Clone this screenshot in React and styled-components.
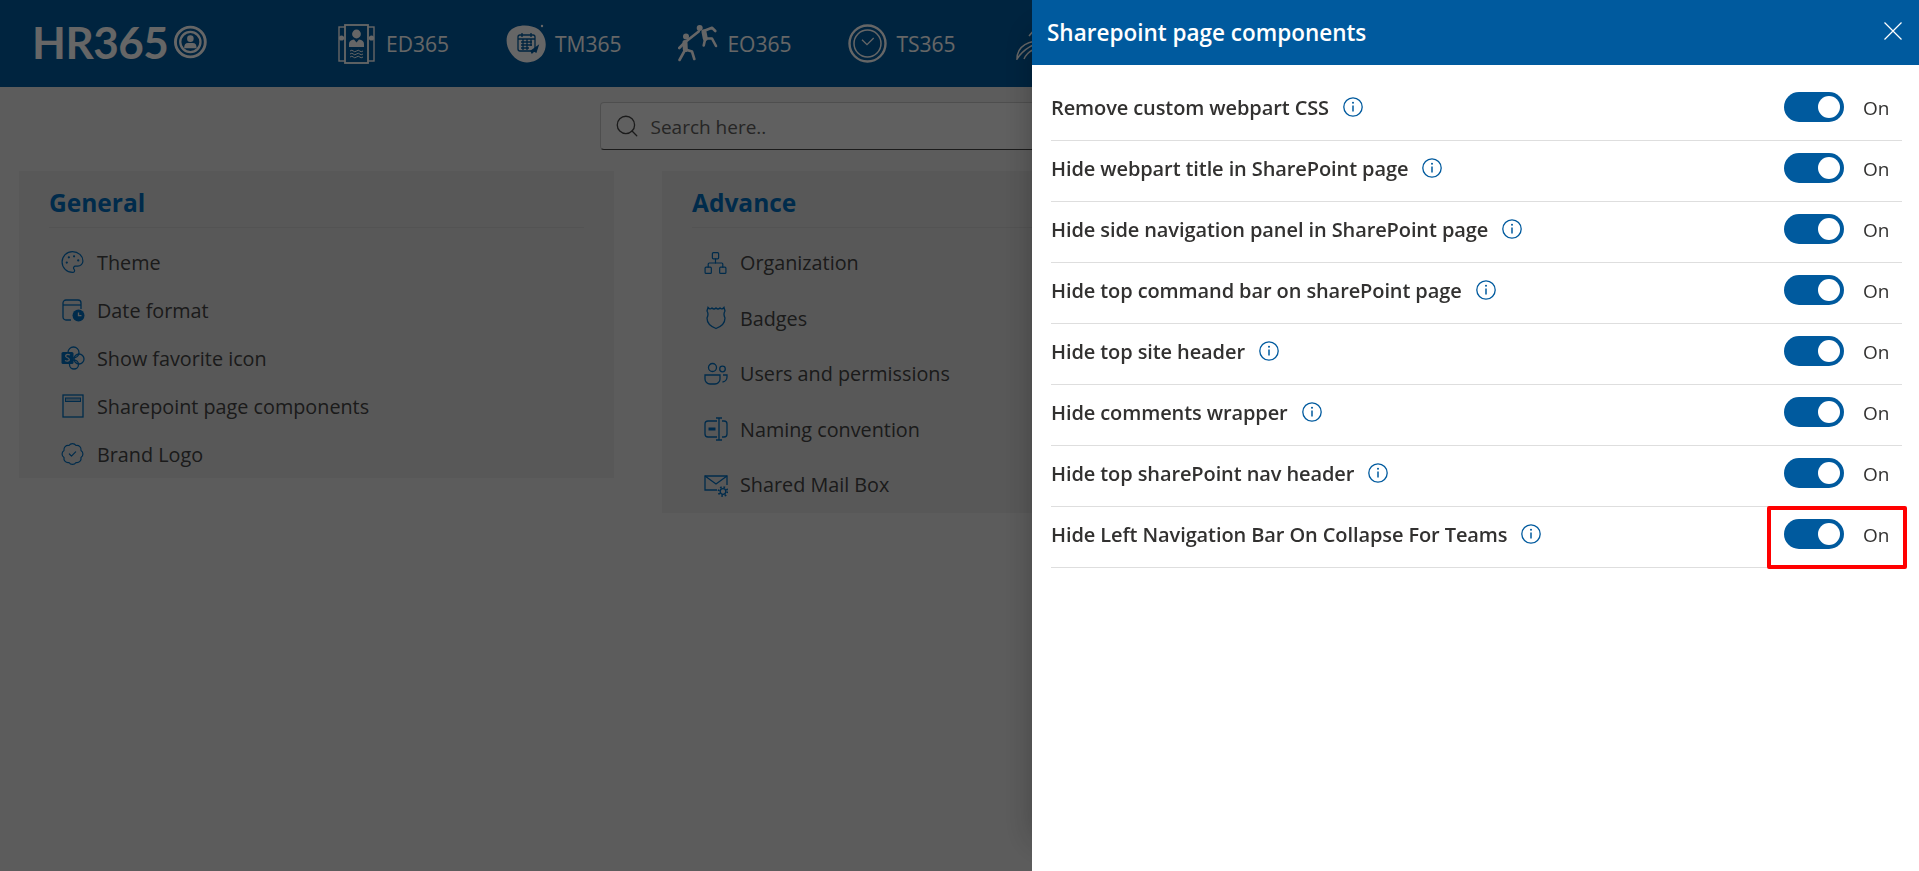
import React from 'react';
import styled, { createGlobalStyle } from 'styled-components';
import { Search, Palette, BadgeCheck, Network } from 'lucide-react';

const BLUE = '#005a9e';

const PersonCard = () => (
	<svg width="37" height="40" viewBox="0 0 37 40" fill="none" stroke="#fff" strokeWidth="1.4">
		<rect x="1" y="3" width="35" height="34" />
		<rect x="7" y="1" width="23" height="38" fill={BLUE} strokeWidth="1.8" />
		<circle cx="3.5" cy="14" r="2.6" fill="#fff" stroke="none" />
		<circle cx="33.5" cy="14" r="2.6" fill="#fff" stroke="none" />
		<circle cx="18.5" cy="10" r="4.4" fill="#fff" stroke="none" />
		<path d="M11 23 v-3 q0-4 5-4.600 l2.500 3 l2.500-3 q5 .600 5 4.600 v3 z" fill="#fff" stroke="none" />
		<path d="M12 27 q2-1.500 3.250 0 t3.250 0 t3.250 0 t3.250 0 M12 30 q2-1.500 3.250 0 t3.250 0 t3.250 0 t3.250 0 M12 33 q2-1.500 3.250 0 t3.250 0 t3.250 0 t3.250 0" strokeWidth="1" />
	</svg>
);

const CalendarBlob = () => (
	<svg width="42" height="40" viewBox="0 0 42 40" fill="none">
		<path d="M3 8 C9 0 24 0 32 5 C40 11 42 22 37 30 C32 38 20 41 12 36 C3 31 -3 17 3 8 z" fill="#fff" />
		<circle cx="36" cy="2" r="1.200" fill="#fff" />
		<g stroke={BLUE} strokeWidth="1.300">
			<rect x="12" y="11" width="17" height="16" rx="2" />
			<path d="M12 15 h17 M16 9 v4 M25 9 v4 M15 18 h11 M15 21 h11 M15 24 h8 M17 15 v11 M21 15 v11 M25 15 v7" />
			<path d="M25 27 l7-5 l-2 6 l-2-1 l-2 2 z" fill={BLUE} />
		</g>
	</svg>
);

const Climbers = () => (
	<svg width="40" height="38" viewBox="0 0 40 38" fill="none" stroke="#fff" strokeWidth="2.600" strokeLinecap="round" strokeLinejoin="round">
		<circle cx="8" cy="11.500" r="3" fill="#fff" stroke="none" />
		<circle cx="21.700" cy="3" r="3" fill="#fff" stroke="none" />
		<path d="M7 17.500 L7.300 24.500" strokeWidth="5" />
		<path d="M7.300 24.500 L1.500 35 M7.300 24.500 L14 26.500 L16.300 34 M6.700 17.500 L1.300 23 M6.700 17.500 L20.700 6.500" />
		<path d="M26 7 L27.300 13.500" strokeWidth="5" />
		<path d="M27.300 13.500 L25.700 20.500 M27.300 13.500 L34 13.500 L38 21 M25.700 6 L34 2.800 L37.300 6" />
	</svg>
);

const ClockRing = () => (
	<svg width="39" height="39" viewBox="0 0 39 39" fill="none" stroke="#fff">
		<circle cx="19.500" cy="19.500" r="18" strokeWidth="2.400" />
		<circle cx="19.500" cy="19.500" r="13.500" strokeWidth="1.500" />
		<path d="M14 15.700 L19 20.700 L25.700 14" strokeWidth="1.300" />
	</svg>
);

const Swoosh = () => (
	<svg width="40" height="32" viewBox="-3 0 40 32" fill="none" stroke="#fff" strokeWidth="1.500">
		<path d="M1 31 C1 18 12 12 32 12 C18 15 8 20 1 31 z" />
		<path d="M8 31 C12 22 22 19 32 19" />
		<path d="M13 8 L19 1" />
	</svg>
);

const DateClock = () => (
	<svg width="24" height="24" viewBox="0 0 24 24" fill="none" stroke="currentColor" strokeWidth="1.300">
		<path d="M10 22 H5 a3 3 0 0 1-3-3 V5 a3 3 0 0 1 3-3 h12 a3 3 0 0 1 3 3 v6" />
		<path d="M2 7 H20" />
		<circle cx="17.500" cy="17.500" r="6" fill="currentColor" stroke="none" />
		<path d="M17.500 14.500 v3.200 h3" stroke="#e0e0e0" />
	</svg>
);

const SharePointIcon = () => (
	<svg width="24" height="24" viewBox="0 0 24 24" fill="none" stroke="currentColor" strokeWidth="1.300">
		<circle cx="12.500" cy="6.500" r="5.500" />
		<circle cx="18" cy="13" r="5" />
		<circle cx="13" cy="18.500" r="4.500" />
		<rect x="0.500" y="6" width="12" height="12" rx="1.500" fill="currentColor" stroke="none" />
		<path d="M9 9 q-2.500-1.200-4 0 q-1 1.500 1 2.500 q3 1 2 3 q-1.500 1.300-4 0" stroke="#ddd" strokeWidth="1.300" />
	</svg>
);

const PageIcon = () => (
	<svg width="24" height="24" viewBox="0 0 24 24" fill="none" stroke="currentColor" strokeWidth="1.300">
		<rect x="2" y="1" width="20" height="22" />
		<rect x="4.500" y="4" width="15" height="3.500" fill="currentColor" fillOpacity="0.35" strokeWidth="1" />
	</svg>
);

const ShieldIcon = () => (
	<svg width="22" height="24" viewBox="0 0 22 24" fill="none" stroke="currentColor" strokeWidth="1.300">
		<path d="M3 1.500 Q5 4 7 2 Q9 4 11 2 Q13 4 15 2 Q17 4 19 1.500 L20 5 Q18 8 20 12 C20 18 15 21 11 22.500 C7 21 2 18 2 12 Q4 8 2 5 z" />
	</svg>
);

const PeopleIcon = () => (
	<svg width="24" height="24" viewBox="0 0 24 24" fill="none" stroke="currentColor" strokeWidth="1.300">
		<circle cx="8.500" cy="5.500" r="4" />
		<circle cx="18.500" cy="7" r="2.800" />
		<path d="M1 13 H16 V17 a5 5 0 0 1-5 5 H6 a5 5 0 0 1-5-5 z" />
		<path d="M19 13 h4 v2 a5 5 0 0 1-4.500 5" />
	</svg>
);

const RenameIcon = () => (
	<svg width="24" height="24" viewBox="0 0 24 24" fill="none" stroke="currentColor" strokeWidth="1.300">
		<path d="M13 4 H4 a3 3 0 0 0-3 3 v10 a3 3 0 0 0 3 3 h9" />
		<path d="M18 4 h2 a3 3 0 0 1 3 3 v10 a3 3 0 0 1-3 3 h-2" />
		<path d="M12 1 h6 M12 23 h6 M15 1 v22" />
		<rect x="4.500" y="10.500" width="7" height="3" fill="currentColor" stroke="none" />
	</svg>
);

const MailGearIcon = () => (
	<svg width="24" height="24" viewBox="0 0 24 24" fill="none" stroke="currentColor" strokeWidth="1.300">
		<path d="M13 17 H1 V3 H23 V12" />
		<path d="M1 3 L12 11 L23 3" />
		<circle cx="19" cy="18.500" r="2.800" />
		<circle cx="19" cy="18.500" r="4.400" strokeDasharray="1.600 1.850" strokeWidth="2" />
	</svg>
);

const InfoIcon = () => (
	<InfoWrap>
		<svg width="20" height="20" viewBox="0 0 20 20" fill="none" stroke={BLUE}>
			<circle cx="10" cy="10" r="9.200" strokeWidth="1.300" />
			<path d="M10 8.500 V14.500" strokeWidth="1.500" />
			<circle cx="10" cy="5.800" r="1" fill={BLUE} stroke="none" />
		</svg>
	</InfoWrap>
);

const CloseIcon = () => (
	<CloseWrap>
		<svg width="18" height="18" viewBox="0 0 18 18" stroke="#fff" strokeWidth="1.200">
			<path d="M0.500 0.500 L17.500 17.500 M17.500 0.500 L0.500 17.500" />
		</svg>
	</CloseWrap>
);

const LogoMark = () => (
	<svg width="34" height="34" viewBox="0 0 34 34" fill="none" stroke="#fff">
		<circle cx="17" cy="17" r="15.500" strokeWidth="3" />
		<circle cx="17" cy="17" r="10.500" strokeWidth="2.400" />
		<circle cx="17" cy="13.500" r="3.400" fill="#fff" stroke="none" />
		<path d="M10.500 23.500 q0-5.500 4-5.500 h5 q4 0 4 5.500 z" fill="#fff" stroke="none" />
	</svg>
);

const products = [
	{ name: 'ED365', gap: 11, icon: <PersonCard /> },
	{ name: 'TM365', gap: 7, icon: <CalendarBlob /> },
	{ name: 'EO365', gap: 9, icon: <Climbers /> },
	{ name: 'TS365', gap: 9, icon: <ClockRing /> },
	{ name: '', gap: 0, icon: <Swoosh /> },
];

const general = [
	{ label: 'Theme', icon: <Palette size={28} strokeWidth={1.15} /> },
	{ label: 'Date format', icon: <DateClock /> },
	{ label: 'Show favorite icon', icon: <SharePointIcon /> },
	{ label: 'Sharepoint page components', icon: <PageIcon /> },
	{ label: 'Brand Logo', icon: <BadgeCheck size={28} strokeWidth={1.15} /> },
];

const advance = [
	{ label: 'Organization', icon: <Network size={28} strokeWidth={1.15} /> },
	{ label: 'Badges', icon: <ShieldIcon /> },
	{ label: 'Users and permissions', icon: <PeopleIcon /> },
	{ label: 'Naming convention', icon: <RenameIcon /> },
	{ label: 'Shared Mail Box', icon: <MailGearIcon /> },
];

const settings = [
	'Remove custom webpart CSS',
	'Hide webpart title in SharePoint page',
	'Hide side navigation panel in SharePoint page',
	'Hide top command bar on sharePoint page',
	'Hide top site header',
	'Hide comments wrapper',
	'Hide top sharePoint nav header',
	'Hide Left Navigation Bar On Collapse For Teams',
];

const SettingsCard = ({ title, items, rowHeight, listTop }) => (
	<Card>
		<CardTitle>{title}</CardTitle>
		<CardList $top={listTop}>
			{items.map((item) => (
				<CardItem key={item.label} $height={rowHeight}>
					<ItemIcon>{item.icon}</ItemIcon>
					{item.label}
				</CardItem>
			))}
		</CardList>
	</Card>
);

const App = () => {
	return (
		<>
			<GlobalStyle />
			<TopBar>
				<Logo>
					HR365
					<LogoMark />
				</Logo>
				<ProductNav>
					{products.map((product, i) => (
						<Product key={i} $gap={product.gap}>
							{product.icon}
							{product.name}
						</Product>
					))}
				</ProductNav>
			</TopBar>
			<SearchBox>
				<Search size={26} strokeWidth={1.2} />
				<SearchText>Search here..</SearchText>
			</SearchBox>
			<Cards>
				<SettingsCard title="General" items={general} rowHeight={48} listTop={10} />
				<SettingsCard title="Advance" items={advance} rowHeight={55.5} listTop={7} />
			</Cards>
			<Overlay />
			<Panel>
				<PanelHeader>
					Sharepoint page components
					<CloseIcon />
				</PanelHeader>
				<PanelBody>
					{settings.map((label, i) => (
						<SettingRow key={label}>
							<SettingLabel>{label}</SettingLabel>
							<InfoIcon />
							<Toggle>
								<Knob />
							</Toggle>
							<ToggleText>On</ToggleText>
							{i === settings.length - 1 && <Highlight />}
						</SettingRow>
					))}
				</PanelBody>
			</Panel>
		</>
	);
};

export default App;

const GlobalStyle = createGlobalStyle`
	html, body {
		margin: 0;
		height: 100%;
		overflow: hidden;
		background: #e6e6e6;
		font-family: 'Open Sans', 'Liberation Sans', sans-serif;
	}
`;

const TopBar = styled.header`
	height: 87px;
	background: ${BLUE};
	display: flex;
	align-items: center;
	padding-left: 32px;
	color: #fff;
`;

const Logo = styled.div`
	width: 175px;
	margin-bottom: 3px;
	display: flex;
	align-items: center;
	gap: 6px;
	font-family: Lato, sans-serif;
	font-size: 44px;
	font-weight: 700;
	letter-spacing: -0.5px;
	line-height: 1;
`;

const ProductNav = styled.nav`
	margin-left: 131px;
	display: flex;
	align-items: center;
	gap: 57px;
	white-space: nowrap;
`;

const Product = styled.div`
	display: flex;
	align-items: center;
	gap: ${(p) => p.$gap}px;
	font-size: 21px;
`;

const SearchBox = styled.div`
	width: 720px;
	height: 48px;
	box-sizing: border-box;
	margin: 15px auto 0;
	padding-left: 13px;
	display: flex;
	align-items: center;
	gap: 11px;
	background: #efefef;
	border: 1px solid #c4c4c4;
	border-bottom-color: #444;
	border-radius: 4px;
	color: #444;
`;

const SearchText = styled.span`
	padding-top: 2px;
	font-size: 19px;
	color: #605e5c;
`;

const Cards = styled.main`
	margin-top: 21px;
	padding-left: 19px;
	display: flex;
	align-items: flex-start;
	gap: 48px;
`;

const Card = styled.section`
	width: 595px;
	box-sizing: border-box;
	padding: 0 30px;
	background: #dcdcdc;
`;

const CardTitle = styled.h2`
	margin: 0;
	height: 57px;
	box-sizing: border-box;
	padding-top: 14px;
	border-bottom: 1px solid #cfcfcf;
	font-size: 24.5px;
	font-weight: 700;
	line-height: 36px;
	color: #006cbb;
`;

const CardList = styled.ul`
	list-style: none;
	margin: 0;
	padding: ${(p) => p.$top}px 0 0 11px;
`;

const CardItem = styled.li`
	height: ${(p) => p.$height}px;
	display: flex;
	align-items: center;
	gap: 12px;
	font-size: 19.8px;
	color: #444;
`;

const ItemIcon = styled.span`
	width: 25px;
	height: 24px;
	display: flex;
	align-items: center;
	justify-content: center;
	color: #006cbb;
`;

const Overlay = styled.div`
	position: fixed;
	inset: 0;
	background: rgba(0, 0, 0, 0.6);
`;

const Panel = styled.aside`
	position: fixed;
	top: 0;
	right: 0;
	bottom: 0;
	width: 887px;
	background: #fff;
	box-shadow: -30px 0 30px -30px rgba(0, 0, 0, 0.25);
`;

const PanelHeader = styled.div`
	height: 65px;
	box-sizing: border-box;
	padding: 0 17px 0 15px;
	display: flex;
	align-items: center;
	justify-content: space-between;
	background: ${BLUE};
	color: #fff;
	font-size: 22.5px;
	font-weight: 600;
`;

const CloseWrap = styled.span`
	display: flex;
	margin-bottom: 3px;
`;

const PanelBody = styled.div`
	padding: 15px 17px 0 19px;
`;

const SettingRow = styled.div`
	position: relative;
	height: 61px;
	box-sizing: border-box;
	padding-top: 12px;
	display: flex;
	align-items: flex-start;
	border-bottom: 1px solid #dedede;
	color: #323130;
`;

const SettingLabel = styled.span`
	margin-right: 14px;
	font-size: 20px;
	font-weight: 560;
	line-height: 32px;
	letter-spacing: -0.1px;
`;

const InfoWrap = styled.span`
	display: flex;
	margin-top: 5px;
`;

const Toggle = styled.div`
	width: 60px;
	height: 30px;
	box-sizing: border-box;
	padding-right: 4px;
	margin-left: auto;
	display: flex;
	align-items: center;
	justify-content: flex-end;
	border-radius: 15px;
	background: ${BLUE};
`;

const Knob = styled.span`
	width: 22px;
	height: 22px;
	border-radius: 50%;
	background: #fff;
`;

const ToggleText = styled.span`
	width: 58px;
	padding-left: 19px;
	box-sizing: border-box;
	font-size: 19px;
	line-height: 33px;
`;

const Highlight = styled.div`
	position: absolute;
	top: -1px;
	right: -5px;
	width: 140px;
	height: 63px;
	box-sizing: border-box;
	border: 4.5px solid #f00;
	border-radius: 2px;
`;
